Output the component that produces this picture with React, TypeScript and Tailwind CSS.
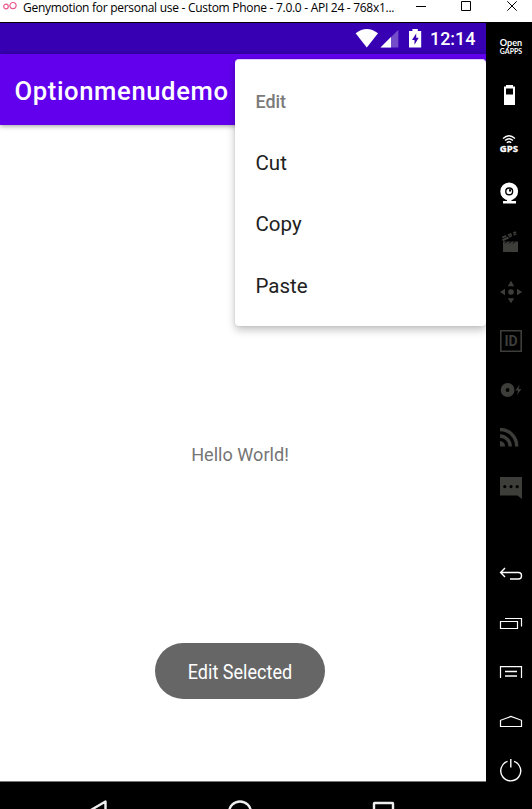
import type { ReactNode } from "react";

const DIM = "#3d3d3a";

// Each cell draws in window coordinates; `top` is the cell's upper edge.
function Cell({ top, label, children }: { top: number; label: string; children: ReactNode }) {
  return (
    <button type="button" aria-label={label} className="block h-[49px] w-[46px] shrink-0">
      <svg width="46" height="49" viewBox={`486 ${top} 46 49`} fill="none">
        {children}
      </svg>
    </button>
  );
}

function TitleBar() {
  return (
    <header className="flex h-[22px] shrink-0 items-start bg-white">
      <svg width="18" height="14" viewBox="0 0 18 14" fill="none" stroke="#e8588f" strokeWidth="1.2" className="shrink-0">
        <circle cx="6" cy="6.5" r="2.3" />
        <circle cx="13" cy="5.6" r="3.1" />
      </svg>
      <span className="ml-[5px] w-[380px] whitespace-nowrap font-['Open_Sans',sans-serif] text-[12px] leading-[15px] tracking-[-0.285px] text-black">
        Genymotion for personal use - Custom Phone - 7.0.0 - API 24 - 768x1...
      </span>
      <svg width="129" height="14" viewBox="403 0 129 14" fill="none" stroke="#000" className="shrink-0">
        <path d="M416 6.5h10" />
        <path d="M461.5 1.5h9v9h-9z" />
        <path d="M507.3 1.3l9.4 9.4M516.7 1.3l-9.4 9.4" />
      </svg>
    </header>
  );
}

function StatusBar() {
  return (
    <div className="flex h-[31px] shrink-0 items-center justify-end bg-[#3700b3] pr-[11px]">
      <svg width="76" height="31" viewBox="354 23 76 31">
        <path d="M355.6 33.3Q366.8 24.8 378 33.3L366.8 47.4z" fill="#fff" />
        <path d="M380.5 47.6L398.4 29.7V47.6z" fill="#fff" fillOpacity=".3" />
        <path d="M380.5 47.6L391 37.1V47.6z" fill="#fff" />
        <path d="M409 31h3.4v-2h5.4v2h3.4v16.6H409z" fill="#fff" />
        <path d="M416.2 33.5l-4.2 6.6h2.5v4.6l4.2-6.9h-2.5z" fill="#3700b3" />
      </svg>
      <span className="w-[45px] whitespace-nowrap pt-px text-[17.9px] font-medium leading-[30px] text-white">12:14</span>
    </div>
  );
}

function OptionsMenu() {
  return (
    <div className="absolute top-[36px] left-[235px] h-[267px] w-[251px] rounded-[4px] border-t border-[#e4d0fc] bg-white px-5 pt-[11px] text-[20.5px] text-[#212121] shadow-[0_4px_9px_rgba(0,0,0,0.24),0_0_3px_rgba(0,0,0,0.1)]">
      <div className="flex h-[62px] items-center pl-[0.5px] text-[17.9px] font-medium text-[#7a7a7a]">Edit</div>
      <div className="flex h-[61px] items-center pl-[0.5px]">Cut</div>
      <div className="flex h-[61px] items-center pl-[0.5px]">Copy</div>
      <div className="flex h-[63px] items-center pl-[0.5px]">Paste</div>
    </div>
  );
}

function Phone() {
  return (
    <main className="relative flex w-[486px] shrink-0 flex-col overflow-hidden bg-white">
      <StatusBar />
      <div className="z-0 flex h-[71px] shrink-0 items-center bg-[#6200ee] pl-[14.5px] pt-[3px] shadow-[0_1px_5px_rgba(0,0,0,0.4)]">
        <h1 className="whitespace-nowrap text-[25.6px] font-medium tracking-[0.63px] text-white">Optionmenudemo</h1>
      </div>
      <section className="flex h-[656px] shrink-0 flex-col items-center pt-[316px]">
        <p className="-ml-[6px] h-[28px] text-[18.1px] leading-[28px] text-[#757575]">Hello World!</p>
        <div className="-ml-[6px] mt-[174px] flex h-[56px] w-[170px] items-center justify-center rounded-full bg-[#666] pt-[2px]">
          <span className="scale-x-[0.885] whitespace-nowrap text-[20.4px] text-white">Edit Selected</span>
        </div>
      </section>
      <nav className="h-[28px] shrink-0 border-t border-[#777] bg-black">
        <svg width="486" height="27" viewBox="0 782 486 27" fill="none" stroke="#eee" strokeWidth="2.4" strokeLinejoin="round">
          <path d="M105.5 801.5v24L85 813.5z" />
          <circle cx="240" cy="812.5" r="11" />
          <rect x="374" y="803" width="19" height="19" rx=".5" />
        </svg>
      </nav>
      <OptionsMenu />
    </main>
  );
}

function Toolbar() {
  return (
    <aside className="-mt-px flex w-[46px] shrink-0 flex-col bg-black">
      <Cell top={22} label="Open GApps">
        <g fill="#fff" className="font-['Lato',sans-serif] font-bold">
          <text x="499.8" y="46" fontSize="9.4" textLength="22.4" lengthAdjust="spacingAndGlyphs">Open</text>
          <text x="499.8" y="53.8" fontSize="7" textLength="22.4" lengthAdjust="spacingAndGlyphs">GAPPS</text>
        </g>
      </Cell>
      <Cell top={71} label="Battery">
        <path fillRule="evenodd" d="M504 86.5h2V85h7v1.5h2V105h-11zM506 88.5v6h7v-6z" fill="#fff" />
      </Cell>
      <Cell top={120} label="GPS">
        <g stroke="#fff" strokeWidth="1.3">
          <path d="M503 138.4Q509 133 515 138.4" />
          <path d="M505 140.6Q509 137 513 140.6" />
          <path d="M506.8 142.8Q509 140.8 511.2 142.8" />
        </g>
        <text x="499.8" y="151.8" fontSize="8.8" fill="#fff" stroke="#fff" strokeWidth=".3" textLength="18.2" lengthAdjust="spacingAndGlyphs" className="font-['Open_Sans',sans-serif] font-bold">GPS</text>
      </Cell>
      <Cell top={169} label="Camera">
        <circle cx="509.2" cy="191.4" r="6.5" stroke="#fff" strokeWidth="4.8" />
        <circle cx="509.2" cy="191.4" r="2.7" fill="#fff" />
        <path d="M509 191.4v-2.2h2v2.2z" fill="#000" />
        <path d="M507 199h4.5v2h4.5v2.5h-13V201h4z" fill="#fff" />
      </Cell>
      <Cell top={218} label="Capture">
        <path d="M503 241.5h15V252h-15z" fill={DIM} />
        <path d="M502.5 240.2l6-2.6" stroke={DIM} strokeWidth="2.2" />
        <path d="M502.2 237.5l4-1.6M508 235.2l3.5-1.4M513.3 233.2l2.8-1.2" stroke={DIM} strokeWidth="1.8" />
        <path d="M509 237l3-1.3M513.6 235.1l2.8-1.2" stroke={DIM} strokeWidth="1.4" />
        <path d="M505 243.6l2.2-2.4M509 243.6l2.2-2.4M513 243.6l2.2-2.4" stroke="#000" />
      </Cell>
      <Cell top={267} label="Move">
        <g fill={DIM}>
          <circle cx="511" cy="292" r="2.8" />
          <path d="M511 280.8l3.2 5.4h-6.4zM511 303.2l3.2-5h-6.4zM500 292l5-3.2v6.4zM522.2 292l-5.2-3.2v6.4z" />
        </g>
      </Cell>
      <Cell top={316} label="Identifiers">
        <path d="M500.8 330.8h20.4v20.4h-20.4z" stroke={DIM} strokeWidth="1.6" />
        <text x="504.5" y="346" fontSize="14" fill={DIM} textLength="13.2" lengthAdjust="spacingAndGlyphs" className="font-bold">ID</text>
      </Cell>
      <Cell top={365} label="Disk I/O">
        <circle cx="507.6" cy="390" r="4.4" stroke={DIM} strokeWidth="5" />
        <path d="M519.6 384.8l-4.2 5.8h2.8l-1.2 4.4 4.4-6h-2.8z" fill={DIM} />
      </Cell>
      <Cell top={414} label="Network">
        <g stroke={DIM} strokeWidth="3.4">
          <path d="M500 429.5A16.5 16.5 0 0 1 516.7 446.5" />
          <path d="M500 436A10.5 10.5 0 0 1 510.2 446.5" />
        </g>
        <path d="M500 441a5 5 0 0 1 5 5.5h-5z" fill={DIM} />
      </Cell>
      <Cell top={463} label="Phone">
        <path d="M500 477h22v22l-4.5-3.5H500z" fill={DIM} />
        <g fill="#000">
          <circle cx="504.8" cy="486.6" r="1.6" />
          <circle cx="511" cy="486.6" r="1.6" />
          <circle cx="517.2" cy="486.6" r="1.6" />
        </g>
      </Cell>
      <div className="h-[37px] shrink-0" />
      <Cell top={549} label="Back">
        <path d="M500.7 572.5H518.5a3 3 0 0 1 3 3v.5a3 3 0 0 1-3 3H510M505 568l-4.4 4.5 4.4 4.5" stroke="#fff" strokeWidth="1.4" />
      </Cell>
      <Cell top={598} label="Recent apps">
        <path d="M500.5 621.5h17v7h-17zM505 618.5h16.5v8" stroke="#fff" strokeWidth="1.2" />
      </Cell>
      <Cell top={647} label="Menu">
        <path d="M500.5 678v-11.3h21V678" stroke="#fff" strokeWidth="1.2" />
        <path d="M505 671.5h12M505 676h12" stroke="#fff" strokeWidth="1.3" />
      </Cell>
      <Cell top={696} label="Home">
        <path d="M500.5 726.5v-6.2L511 716.4l10.5 3.9v6.2z" stroke="#fff" strokeWidth="1.2" />
      </Cell>
      <Cell top={745} label="Power">
        <path d="M507.5 761.4A10 10 0 1 0 514 761.4M510.8 759v8.5" stroke="#fff" strokeWidth="1.4" />
      </Cell>
    </aside>
  );
}

export default function App() {
  return (
    <div className="flex h-[809px] w-[532px] flex-col overflow-hidden bg-black font-['Roboto',sans-serif]">
      <TitleBar />
      <div className="mt-px flex flex-1">
        <Phone />
        <Toolbar />
      </div>
    </div>
  );
}
